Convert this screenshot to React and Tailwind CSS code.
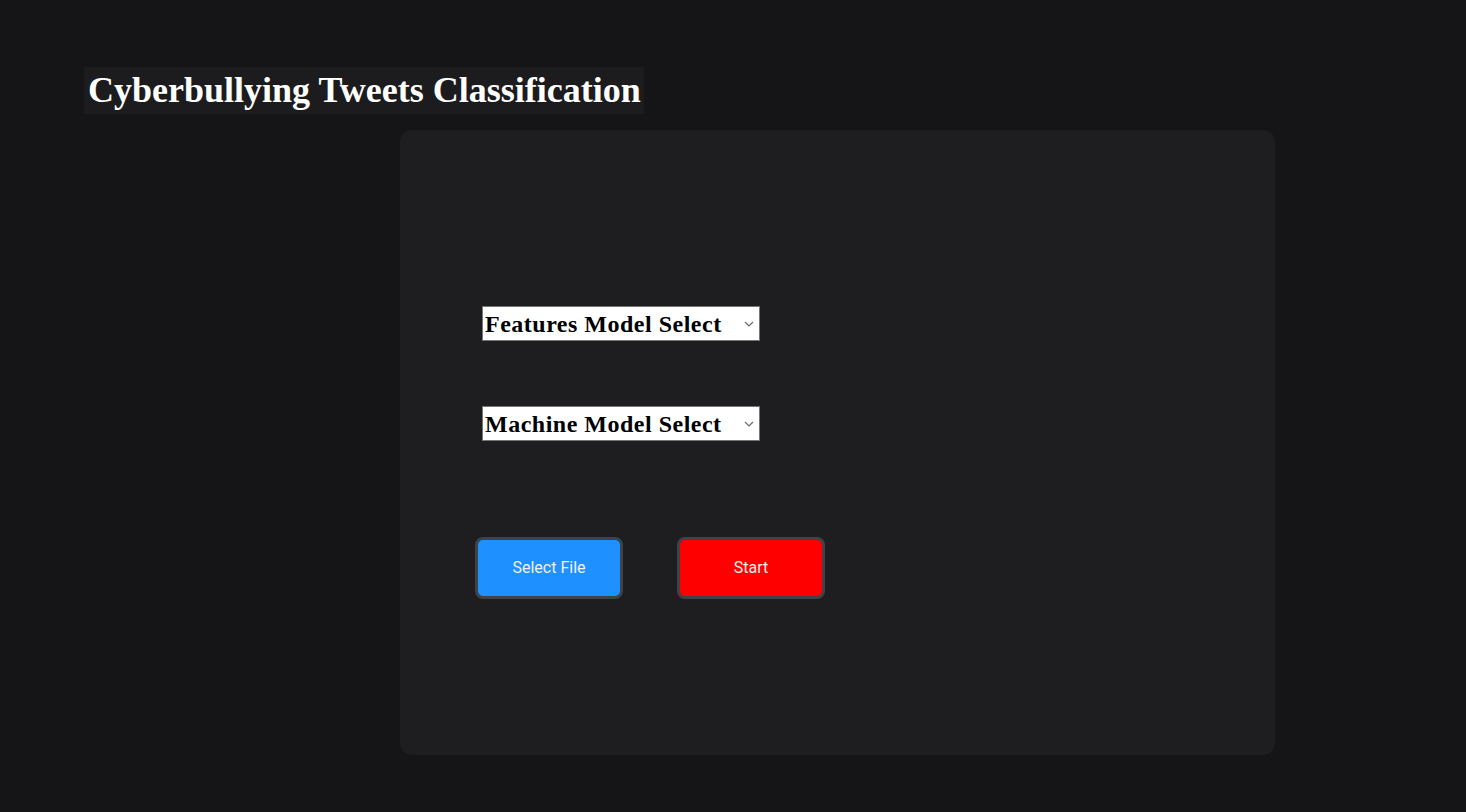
import React from "react";

function Chevron() {
  return (
    <svg width="10" height="6" viewBox="0 0 10 6" className="shrink-0">
      <path d="M1 1l4 4 4-4" fill="none" stroke="#6b6b6b" strokeWidth="1.2" />
    </svg>
  );
}

function SelectBox({ label }) {
  return (
    <div className="w-[278px] h-[35px] bg-white border border-[#767676] flex items-center justify-between pl-[2px] pr-[5px]">
      <span className="text-black font-bold text-[24px] tracking-[0.5px] leading-none whitespace-nowrap" style={{ fontFamily: '"Liberation Serif", serif' }}>
        {label}
      </span>
      <Chevron />
    </div>
  );
}

export default function App() {
  return (
    <div className="min-h-[812px] w-full bg-[#151517] flex flex-col" style={{ fontFamily: 'Roboto, sans-serif' }}>
      <div className="pt-[67px] pl-[84px]">
        <h1
          className="inline-block bg-[#1c1c1e] text-white font-bold text-[36px] leading-[47px] pl-[4px] pr-[3px] h-[47px] whitespace-nowrap"
          style={{ fontFamily: '"Liberation Serif", serif' }}
        >
          Cyberbullying Tweets Classification
        </h1>
      </div>
      <div className="pl-[400px] pt-[16px]">
        <div className="w-[875px] h-[625px] bg-[#1e1e20] rounded-[12px] flex flex-col pl-[75px] pt-[176px]">
          <div className="pl-[7px] flex flex-col gap-[65px]">
            <SelectBox label="Features Model Select" />
            <SelectBox label="Machine Model Select" />
          </div>
          <div className="flex gap-[54px] mt-[96px]">
            <button className="w-[148px] h-[62px] rounded-[8px] border-[3px] border-[#3f4249] bg-[#1e90ff] text-[#f0f0f0] text-[16px]">
              Select File
            </button>
            <button className="w-[148px] h-[62px] rounded-[8px] border-[3px] border-[#3f4249] bg-[#ff0000] text-[#f0f0f0] text-[16px]">
              Start
            </button>
          </div>
        </div>
      </div>
    </div>
  );
}
